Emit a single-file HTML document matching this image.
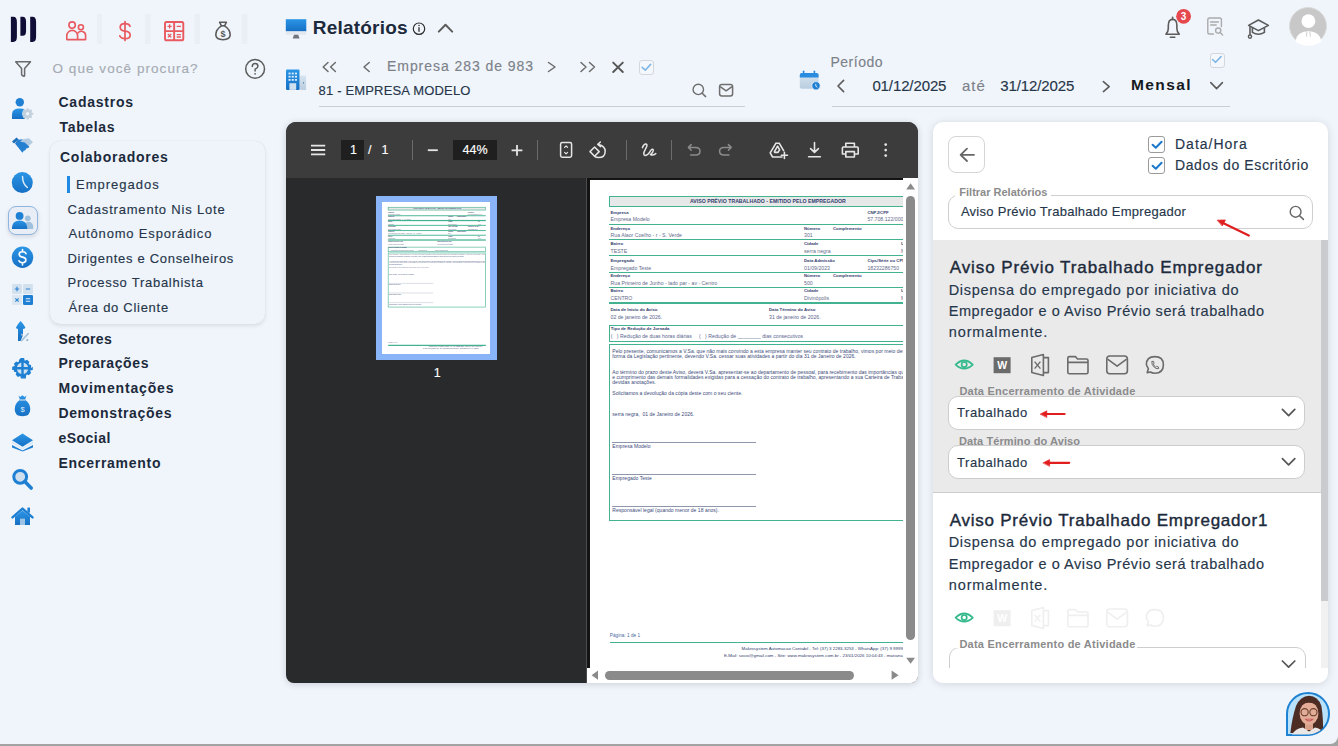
<!DOCTYPE html>
<html><head><meta charset="utf-8">
<style>
html,body{margin:0;padding:0}
body{width:1338px;height:746px;overflow:hidden;position:relative;background:#a3a3a3;font-family:"Liberation Sans",sans-serif}
#app{position:absolute;left:0;top:0;width:1338px;height:744px;background:#f0f5fc;border-bottom-right-radius:8px;overflow:hidden}
.t{position:absolute;white-space:nowrap;line-height:1}
.rg{-webkit-text-stroke:0.15px currentColor}
.abs{position:absolute}
</style></head><body>
<div id="app">
<!-- submenu card -->
<div class="abs" style="left:50px;top:141px;width:215px;height:183px;border-radius:10px;background:#eff4fb;box-shadow:0 2px 4px rgba(0,0,0,0.09),0 0 1px rgba(0,0,0,0.12)"></div>
<div class="abs" style="left:67px;top:176px;width:3px;height:17px;background:#1e88e5"></div>
<!-- selected sidebar item -->
<div class="abs" style="left:8px;top:206px;width:28px;height:27px;border-radius:8px;border:1px solid #8fb5e0;background:#e9eef6;box-shadow:0 2px 4px rgba(0,0,0,0.12)"></div>
<!-- header underlines -->
<div class="abs" style="left:319px;top:106px;width:426px;height:1px;background:#c9ced6"></div>
<div class="abs" style="left:832px;top:106px;width:398px;height:1px;background:#c9ced6"></div>
<!-- checkboxes header -->
<div class="abs" style="left:639px;top:60px;width:13px;height:13px;border:1px solid #d3d6db;border-radius:3px;background:#f4f7fb"></div>
<div class="abs" style="left:1209.5px;top:52.5px;width:13px;height:13px;border:1px solid #d3d6db;border-radius:3px;background:#f4f7fb"></div>
<!-- top avatar -->
<div class="abs" style="left:1289px;top:7px;width:38px;height:38px;border-radius:50%;background:#c8c8c8;border:1px solid #dcdcdc;box-sizing:border-box"></div>
<!-- PDF viewer -->
<div class="abs" style="left:286px;top:122px;width:632px;height:561px;border-radius:10px 10px 8px 8px;background:#282a2c;overflow:hidden;box-shadow:0 1px 7px rgba(0,0,0,0.17)">
  <div class="abs" style="left:0;top:0;width:632px;height:56px;background:#3c3c3c"></div>
  <div class="abs" style="left:55px;top:18px;width:23px;height:20px;background:#1f1f1f"></div>
  <div class="abs" style="left:167px;top:18px;width:44px;height:20px;background:#1f1f1f"></div>
  <div class="abs" style="left:126px;top:18px;width:1px;height:20px;background:#6b6b6b"></div>
  <div class="abs" style="left:251px;top:18px;width:1px;height:20px;background:#6b6b6b"></div>
  <div class="abs" style="left:340px;top:18px;width:1px;height:20px;background:#6b6b6b"></div>
  <div class="abs" style="left:385px;top:18px;width:1px;height:20px;background:#6b6b6b"></div>
  <!-- thumbnail -->
  <div class="abs" style="left:89.5px;top:73.7px;width:121px;height:164px;background:#8ab4f8"></div>
  <div class="abs" style="left:96px;top:79.6px;width:108px;height:152.7px;background:#fff;overflow:hidden"><div class="abs" style="left:0;top:0;width:349.5px;height:494px;background:#fff;transform:scale(0.309);transform-origin:0 0"><div class="abs" style="left:19.3px;top:16.3px;width:317.2px;height:10.4px;background:#e7e9e9;border:2.6px solid #43b290;box-sizing:border-box"></div>
<div class="t" style="left:19.3px;top:19.20px;font-size:5.2px;line-height:5.2px;font-weight:700;color:#33406e;width:317.20000000000005px;text-align:center">AVISO PRÉVIO TRABALHADO - EMITIDO PELO EMPREGADOR</div>
<div class="t" style="left:20.5px;top:30.55px;font-size:4.3px;line-height:4.3px;font-weight:700;color:#33406e;">Empresa</div>
<div class="t" style="left:20.5px;top:37.30px;font-size:5.2px;line-height:5.2px;font-weight:400;color:#646c8c;">Empresa Modelo</div>
<div class="t" style="left:277.4px;top:30.55px;font-size:4.3px;line-height:4.3px;font-weight:700;color:#33406e;">CNPJ/CPF</div>
<div class="t" style="left:277.4px;top:37.30px;font-size:5.2px;line-height:5.2px;font-weight:400;color:#646c8c;">57.708.122/0001-00</div>
<div class="abs" style="left:19.3px;top:42.6px;width:317.2px;height:3.4px;background:#43b290"></div>
<div class="t" style="left:20.5px;top:46.65px;font-size:4.3px;line-height:4.3px;font-weight:700;color:#33406e;">Endereço</div>
<div class="t" style="left:20.5px;top:53.00px;font-size:5.2px;line-height:5.2px;font-weight:400;color:#646c8c;">Rua Alaor Coelho - r - S. Verde</div>
<div class="t" style="left:214.0px;top:46.65px;font-size:4.3px;line-height:4.3px;font-weight:700;color:#33406e;">Número</div>
<div class="t" style="left:214.0px;top:53.00px;font-size:5.2px;line-height:5.2px;font-weight:400;color:#646c8c;">301</div>
<div class="t" style="left:243.0px;top:46.65px;font-size:4.3px;line-height:4.3px;font-weight:700;color:#33406e;">Complemento</div>
<div class="abs" style="left:19.3px;top:58.2px;width:317.2px;height:3.4px;background:#43b290"></div>
<div class="t" style="left:20.5px;top:62.45px;font-size:4.3px;line-height:4.3px;font-weight:700;color:#33406e;">Bairro</div>
<div class="t" style="left:20.5px;top:69.00px;font-size:5.2px;line-height:5.2px;font-weight:400;color:#646c8c;">TESTE</div>
<div class="t" style="left:214.0px;top:62.45px;font-size:4.3px;line-height:4.3px;font-weight:700;color:#33406e;">Cidade</div>
<div class="t" style="left:214.0px;top:69.00px;font-size:5.2px;line-height:5.2px;font-weight:400;color:#646c8c;">serra negra</div>
<div class="t" style="left:311.0px;top:62.45px;font-size:4.3px;line-height:4.3px;font-weight:700;color:#33406e;">UF</div>
<div class="t" style="left:311.0px;top:69.00px;font-size:5.2px;line-height:5.2px;font-weight:400;color:#646c8c;">MG</div>
<div class="abs" style="left:19.3px;top:74.0px;width:317.2px;height:3.4px;background:#43b290"></div>
<div class="t" style="left:20.5px;top:79.45px;font-size:4.3px;line-height:4.3px;font-weight:700;color:#33406e;">Empregado</div>
<div class="t" style="left:20.5px;top:86.00px;font-size:5.2px;line-height:5.2px;font-weight:400;color:#646c8c;">Empregado Teste</div>
<div class="t" style="left:214.0px;top:79.45px;font-size:4.3px;line-height:4.3px;font-weight:700;color:#33406e;">Data Admissão</div>
<div class="t" style="left:214.0px;top:86.00px;font-size:5.2px;line-height:5.2px;font-weight:400;color:#646c8c;">01/09/2023</div>
<div class="t" style="left:277.4px;top:79.45px;font-size:4.3px;line-height:4.3px;font-weight:700;color:#33406e;">Ctps/Série ou CPF</div>
<div class="t" style="left:277.4px;top:86.00px;font-size:5.2px;line-height:5.2px;font-weight:400;color:#646c8c;">18232286750</div>
<div class="abs" style="left:19.3px;top:91.0px;width:317.2px;height:3.4px;background:#43b290"></div>
<div class="t" style="left:20.5px;top:94.45px;font-size:4.3px;line-height:4.3px;font-weight:700;color:#33406e;">Endereço</div>
<div class="t" style="left:20.5px;top:101.00px;font-size:5.2px;line-height:5.2px;font-weight:400;color:#646c8c;">Rua Primeiro de Junho - lado par - av - Centro</div>
<div class="t" style="left:214.0px;top:94.45px;font-size:4.3px;line-height:4.3px;font-weight:700;color:#33406e;">Número</div>
<div class="t" style="left:214.0px;top:101.00px;font-size:5.2px;line-height:5.2px;font-weight:400;color:#646c8c;">500</div>
<div class="t" style="left:243.0px;top:94.45px;font-size:4.3px;line-height:4.3px;font-weight:700;color:#33406e;">Complemento</div>
<div class="abs" style="left:19.3px;top:106.1px;width:317.2px;height:3.4px;background:#43b290"></div>
<div class="t" style="left:20.5px;top:109.45px;font-size:4.3px;line-height:4.3px;font-weight:700;color:#33406e;">Bairro</div>
<div class="t" style="left:20.5px;top:116.00px;font-size:5.2px;line-height:5.2px;font-weight:400;color:#646c8c;">CENTRO</div>
<div class="t" style="left:214.0px;top:109.45px;font-size:4.3px;line-height:4.3px;font-weight:700;color:#33406e;">Cidade</div>
<div class="t" style="left:214.0px;top:116.00px;font-size:5.2px;line-height:5.2px;font-weight:400;color:#646c8c;">Divinópolis</div>
<div class="t" style="left:311.0px;top:109.45px;font-size:4.3px;line-height:4.3px;font-weight:700;color:#33406e;">UF</div>
<div class="t" style="left:311.0px;top:116.00px;font-size:5.2px;line-height:5.2px;font-weight:400;color:#646c8c;">MG</div>
<div class="abs" style="left:19.3px;top:121.4px;width:317.2px;height:3.4px;background:#43b290"></div>
<div class="t" style="left:20.5px;top:128.35px;font-size:4.3px;line-height:4.3px;font-weight:700;color:#33406e;">Data de Início do Aviso</div>
<div class="t" style="left:179.0px;top:128.35px;font-size:4.3px;line-height:4.3px;font-weight:700;color:#33406e;">Data Término do Aviso</div>
<div class="t" style="left:20.5px;top:135.20px;font-size:5.2px;line-height:5.2px;font-weight:400;color:#5a6590;">02 de janeiro de 2026.</div>
<div class="t" style="left:179.0px;top:135.20px;font-size:5.2px;line-height:5.2px;font-weight:400;color:#5a6590;">31 de janeiro de 2026.</div>
<div class="abs" style="left:19.3px;top:145.0px;width:317.2px;height:17.0px;border:2.6px solid #43b290;box-sizing:border-box"></div>
<div class="t" style="left:20.8px;top:147.25px;font-size:4.3px;line-height:4.3px;font-weight:700;color:#33406e;">Tipo de Redução de Jornada</div>
<div class="t" style="left:20.8px;top:153.60px;font-size:5.2px;line-height:5.2px;font-weight:400;color:#5a6590;">(&nbsp;&nbsp;&nbsp;) Redução de duas horas diárias &nbsp;&nbsp;&nbsp; (&nbsp;&nbsp;&nbsp;) Redução de ________ dias consecutivos</div>
<div class="abs" style="left:19.3px;top:163.6px;width:317.2px;height:177.2px;border:2.6px solid #43b290;box-sizing:border-box"></div>
<div class="t" style="left:22.3px;top:168.50px;font-size:5.0px;line-height:5.0px;font-weight:400;color:#3b4a7a;letter-spacing:0.03px;width:311px;overflow:hidden">Pelo presente, comunicamos a V.Sa. que não mais convindo a esta empresa manter seu contrato de trabalho, vimos por meio deste, rescindi-lo de acordo com a</div>
<div class="t" style="left:22.3px;top:173.60px;font-size:5.0px;line-height:5.0px;font-weight:400;color:#3b4a7a;letter-spacing:0.03px;width:311px;overflow:hidden">forma da Legislação pertinente, devendo V.Sa. cessar suas atividades a partir do dia 31 de Janeiro de 2026.</div>
<div class="t" style="left:22.3px;top:189.60px;font-size:5.0px;line-height:5.0px;font-weight:400;color:#3b4a7a;letter-spacing:0.03px;width:311px;overflow:hidden">Ao término do prazo deste Aviso, deverá V.Sa. apresentar-se ao departamento de pessoal, para recebimento das importâncias que lhe são devidas</div>
<div class="t" style="left:22.3px;top:194.70px;font-size:5.0px;line-height:5.0px;font-weight:400;color:#3b4a7a;letter-spacing:0.03px;width:311px;overflow:hidden">e cumprimento das demais formalidades exigidas para a cessação do contrato de trabalho, apresentando a sua Carteira de Trabalho para as</div>
<div class="t" style="left:22.3px;top:199.60px;font-size:5.0px;line-height:5.0px;font-weight:400;color:#3b4a7a;letter-spacing:0.03px;width:311px;overflow:hidden">devidas anotações.</div>
<div class="t" style="left:22.3px;top:210.50px;font-size:5.0px;line-height:5.0px;font-weight:400;color:#3b4a7a;letter-spacing:0.03px;width:311px;overflow:hidden">Solicitamos a devolução da cópia deste com o seu ciente.</div>
<div class="t" style="left:22.3px;top:231.70px;font-size:5.0px;line-height:5.0px;font-weight:400;color:#3b4a7a;letter-spacing:0.03px;width:311px;overflow:hidden">serra negra,&nbsp; 01 de Janeiro de 2026.</div>
<div class="t" style="left:22.3px;top:264.30px;font-size:5.0px;line-height:5.0px;font-weight:400;color:#3b4a7a;letter-spacing:0.03px;width:311px;overflow:hidden">Empresa Modelo</div>
<div class="t" style="left:22.3px;top:295.80px;font-size:5.0px;line-height:5.0px;font-weight:400;color:#3b4a7a;letter-spacing:0.03px;width:311px;overflow:hidden">Empregado Teste</div>
<div class="t" style="left:22.3px;top:328.10px;font-size:5.0px;line-height:5.0px;font-weight:400;color:#3b4a7a;letter-spacing:0.03px;width:311px;overflow:hidden">Responsável legal (quando menor de 18 anos).</div>
<div class="abs" style="left:22.3px;top:261.7px;width:144.2px;height:1.8px;background:#8f97ab"></div>
<div class="abs" style="left:22.3px;top:293.5px;width:144.2px;height:1.8px;background:#8f97ab"></div>
<div class="abs" style="left:22.3px;top:325.7px;width:144.2px;height:1.8px;background:#8f97ab"></div>
<div class="t" style="left:19.8px;top:453.85px;font-size:4.7px;line-height:4.7px;font-weight:400;color:#4a6aa0;">Página: 1 de 1</div>
<div class="abs" style="left:19.8px;top:462.0px;width:316.7px;height:3.6px;background:#43b290"></div>
<div class="t" style="left:151.6px;top:466.80px;font-size:4.4px;line-height:4.4px;font-weight:400;color:#33406e;">Makrosystem Automacao Contabil - Tel: (37) 3 2283-3253 - WhatsApp: (37) 9 9999-9999</div>
<div class="t" style="left:133.9px;top:474.10px;font-size:4.4px;line-height:4.4px;font-weight:400;color:#33406e;">E-Mail: socio@gmail.com - Site: www.makrosystem.com.br - 23/01/2026 10:04:43 - mariana</div></div></div>
  <div class="abs" style="left:299.5px;top:56px;width:1.5px;height:505px;background:#4a4c4e"></div>
  <div class="abs" style="left:301px;top:56px;width:331px;height:505px;background:#141414"></div>
  <!-- page -->
  <div id="pagewrap" class="abs" style="left:304px;top:58px;width:313px;height:488px;overflow:hidden;background:#fff">
  <div class="abs" style="left:0;top:0;width:349.5px;height:494px;background:#fff"><div class="abs" style="left:19.3px;top:16.3px;width:317.2px;height:10.4px;background:#e7e9e9;border:1.0px solid #43b290;box-sizing:border-box"></div>
<div class="t" style="left:19.3px;top:19.20px;font-size:5.2px;line-height:5.2px;font-weight:700;color:#33406e;width:317.20000000000005px;text-align:center">AVISO PRÉVIO TRABALHADO - EMITIDO PELO EMPREGADOR</div>
<div class="t" style="left:20.5px;top:30.55px;font-size:4.3px;line-height:4.3px;font-weight:700;color:#33406e;">Empresa</div>
<div class="t" style="left:20.5px;top:37.30px;font-size:5.2px;line-height:5.2px;font-weight:400;color:#646c8c;">Empresa Modelo</div>
<div class="t" style="left:277.4px;top:30.55px;font-size:4.3px;line-height:4.3px;font-weight:700;color:#33406e;">CNPJ/CPF</div>
<div class="t" style="left:277.4px;top:37.30px;font-size:5.2px;line-height:5.2px;font-weight:400;color:#646c8c;">57.708.122/0001-00</div>
<div class="abs" style="left:19.3px;top:43.6px;width:317.2px;height:1.3px;background:#43b290"></div>
<div class="t" style="left:20.5px;top:46.65px;font-size:4.3px;line-height:4.3px;font-weight:700;color:#33406e;">Endereço</div>
<div class="t" style="left:20.5px;top:53.00px;font-size:5.2px;line-height:5.2px;font-weight:400;color:#646c8c;">Rua Alaor Coelho - r - S. Verde</div>
<div class="t" style="left:214.0px;top:46.65px;font-size:4.3px;line-height:4.3px;font-weight:700;color:#33406e;">Número</div>
<div class="t" style="left:214.0px;top:53.00px;font-size:5.2px;line-height:5.2px;font-weight:400;color:#646c8c;">301</div>
<div class="t" style="left:243.0px;top:46.65px;font-size:4.3px;line-height:4.3px;font-weight:700;color:#33406e;">Complemento</div>
<div class="abs" style="left:19.3px;top:59.2px;width:317.2px;height:1.3px;background:#43b290"></div>
<div class="t" style="left:20.5px;top:62.45px;font-size:4.3px;line-height:4.3px;font-weight:700;color:#33406e;">Bairro</div>
<div class="t" style="left:20.5px;top:69.00px;font-size:5.2px;line-height:5.2px;font-weight:400;color:#646c8c;">TESTE</div>
<div class="t" style="left:214.0px;top:62.45px;font-size:4.3px;line-height:4.3px;font-weight:700;color:#33406e;">Cidade</div>
<div class="t" style="left:214.0px;top:69.00px;font-size:5.2px;line-height:5.2px;font-weight:400;color:#646c8c;">serra negra</div>
<div class="t" style="left:311.0px;top:62.45px;font-size:4.3px;line-height:4.3px;font-weight:700;color:#33406e;">UF</div>
<div class="t" style="left:311.0px;top:69.00px;font-size:5.2px;line-height:5.2px;font-weight:400;color:#646c8c;">MG</div>
<div class="abs" style="left:19.3px;top:75.0px;width:317.2px;height:1.3px;background:#43b290"></div>
<div class="t" style="left:20.5px;top:79.45px;font-size:4.3px;line-height:4.3px;font-weight:700;color:#33406e;">Empregado</div>
<div class="t" style="left:20.5px;top:86.00px;font-size:5.2px;line-height:5.2px;font-weight:400;color:#646c8c;">Empregado Teste</div>
<div class="t" style="left:214.0px;top:79.45px;font-size:4.3px;line-height:4.3px;font-weight:700;color:#33406e;">Data Admissão</div>
<div class="t" style="left:214.0px;top:86.00px;font-size:5.2px;line-height:5.2px;font-weight:400;color:#646c8c;">01/09/2023</div>
<div class="t" style="left:277.4px;top:79.45px;font-size:4.3px;line-height:4.3px;font-weight:700;color:#33406e;">Ctps/Série ou CPF</div>
<div class="t" style="left:277.4px;top:86.00px;font-size:5.2px;line-height:5.2px;font-weight:400;color:#646c8c;">18232286750</div>
<div class="abs" style="left:19.3px;top:92.0px;width:317.2px;height:1.3px;background:#43b290"></div>
<div class="t" style="left:20.5px;top:94.45px;font-size:4.3px;line-height:4.3px;font-weight:700;color:#33406e;">Endereço</div>
<div class="t" style="left:20.5px;top:101.00px;font-size:5.2px;line-height:5.2px;font-weight:400;color:#646c8c;">Rua Primeiro de Junho - lado par - av - Centro</div>
<div class="t" style="left:214.0px;top:94.45px;font-size:4.3px;line-height:4.3px;font-weight:700;color:#33406e;">Número</div>
<div class="t" style="left:214.0px;top:101.00px;font-size:5.2px;line-height:5.2px;font-weight:400;color:#646c8c;">500</div>
<div class="t" style="left:243.0px;top:94.45px;font-size:4.3px;line-height:4.3px;font-weight:700;color:#33406e;">Complemento</div>
<div class="abs" style="left:19.3px;top:107.1px;width:317.2px;height:1.3px;background:#43b290"></div>
<div class="t" style="left:20.5px;top:109.45px;font-size:4.3px;line-height:4.3px;font-weight:700;color:#33406e;">Bairro</div>
<div class="t" style="left:20.5px;top:116.00px;font-size:5.2px;line-height:5.2px;font-weight:400;color:#646c8c;">CENTRO</div>
<div class="t" style="left:214.0px;top:109.45px;font-size:4.3px;line-height:4.3px;font-weight:700;color:#33406e;">Cidade</div>
<div class="t" style="left:214.0px;top:116.00px;font-size:5.2px;line-height:5.2px;font-weight:400;color:#646c8c;">Divinópolis</div>
<div class="t" style="left:311.0px;top:109.45px;font-size:4.3px;line-height:4.3px;font-weight:700;color:#33406e;">UF</div>
<div class="t" style="left:311.0px;top:116.00px;font-size:5.2px;line-height:5.2px;font-weight:400;color:#646c8c;">MG</div>
<div class="abs" style="left:19.3px;top:122.4px;width:317.2px;height:1.3px;background:#43b290"></div>
<div class="t" style="left:20.5px;top:128.35px;font-size:4.3px;line-height:4.3px;font-weight:700;color:#33406e;">Data de Início do Aviso</div>
<div class="t" style="left:179.0px;top:128.35px;font-size:4.3px;line-height:4.3px;font-weight:700;color:#33406e;">Data Término do Aviso</div>
<div class="t" style="left:20.5px;top:135.20px;font-size:5.2px;line-height:5.2px;font-weight:400;color:#5a6590;">02 de janeiro de 2026.</div>
<div class="t" style="left:179.0px;top:135.20px;font-size:5.2px;line-height:5.2px;font-weight:400;color:#5a6590;">31 de janeiro de 2026.</div>
<div class="abs" style="left:19.3px;top:145.0px;width:317.2px;height:17.0px;border:1.0px solid #43b290;box-sizing:border-box"></div>
<div class="t" style="left:20.8px;top:147.25px;font-size:4.3px;line-height:4.3px;font-weight:700;color:#33406e;">Tipo de Redução de Jornada</div>
<div class="t" style="left:20.8px;top:153.60px;font-size:5.2px;line-height:5.2px;font-weight:400;color:#5a6590;">(&nbsp;&nbsp;&nbsp;) Redução de duas horas diárias &nbsp;&nbsp;&nbsp; (&nbsp;&nbsp;&nbsp;) Redução de ________ dias consecutivos</div>
<div class="abs" style="left:19.3px;top:163.6px;width:317.2px;height:177.2px;border:1.0px solid #43b290;box-sizing:border-box"></div>
<div class="t" style="left:22.3px;top:168.50px;font-size:5.0px;line-height:5.0px;font-weight:400;color:#3b4a7a;letter-spacing:0.03px;width:311px;overflow:hidden">Pelo presente, comunicamos a V.Sa. que não mais convindo a esta empresa manter seu contrato de trabalho, vimos por meio deste, rescindi-lo de acordo com a</div>
<div class="t" style="left:22.3px;top:173.60px;font-size:5.0px;line-height:5.0px;font-weight:400;color:#3b4a7a;letter-spacing:0.03px;width:311px;overflow:hidden">forma da Legislação pertinente, devendo V.Sa. cessar suas atividades a partir do dia 31 de Janeiro de 2026.</div>
<div class="t" style="left:22.3px;top:189.60px;font-size:5.0px;line-height:5.0px;font-weight:400;color:#3b4a7a;letter-spacing:0.03px;width:311px;overflow:hidden">Ao término do prazo deste Aviso, deverá V.Sa. apresentar-se ao departamento de pessoal, para recebimento das importâncias que lhe são devidas</div>
<div class="t" style="left:22.3px;top:194.70px;font-size:5.0px;line-height:5.0px;font-weight:400;color:#3b4a7a;letter-spacing:0.03px;width:311px;overflow:hidden">e cumprimento das demais formalidades exigidas para a cessação do contrato de trabalho, apresentando a sua Carteira de Trabalho para as</div>
<div class="t" style="left:22.3px;top:199.60px;font-size:5.0px;line-height:5.0px;font-weight:400;color:#3b4a7a;letter-spacing:0.03px;width:311px;overflow:hidden">devidas anotações.</div>
<div class="t" style="left:22.3px;top:210.50px;font-size:5.0px;line-height:5.0px;font-weight:400;color:#3b4a7a;letter-spacing:0.03px;width:311px;overflow:hidden">Solicitamos a devolução da cópia deste com o seu ciente.</div>
<div class="t" style="left:22.3px;top:231.70px;font-size:5.0px;line-height:5.0px;font-weight:400;color:#3b4a7a;letter-spacing:0.03px;width:311px;overflow:hidden">serra negra,&nbsp; 01 de Janeiro de 2026.</div>
<div class="t" style="left:22.3px;top:264.30px;font-size:5.0px;line-height:5.0px;font-weight:400;color:#3b4a7a;letter-spacing:0.03px;width:311px;overflow:hidden">Empresa Modelo</div>
<div class="t" style="left:22.3px;top:295.80px;font-size:5.0px;line-height:5.0px;font-weight:400;color:#3b4a7a;letter-spacing:0.03px;width:311px;overflow:hidden">Empregado Teste</div>
<div class="t" style="left:22.3px;top:328.10px;font-size:5.0px;line-height:5.0px;font-weight:400;color:#3b4a7a;letter-spacing:0.03px;width:311px;overflow:hidden">Responsável legal (quando menor de 18 anos).</div>
<div class="abs" style="left:22.3px;top:261.7px;width:144.2px;height:0.7px;background:#8f97ab"></div>
<div class="abs" style="left:22.3px;top:293.5px;width:144.2px;height:0.7px;background:#8f97ab"></div>
<div class="abs" style="left:22.3px;top:325.7px;width:144.2px;height:0.7px;background:#8f97ab"></div>
<div class="t" style="left:19.8px;top:453.85px;font-size:4.7px;line-height:4.7px;font-weight:400;color:#4a6aa0;">Página: 1 de 1</div>
<div class="abs" style="left:19.8px;top:462.0px;width:316.7px;height:1.4px;background:#43b290"></div>
<div class="t" style="left:151.6px;top:466.80px;font-size:4.4px;line-height:4.4px;font-weight:400;color:#33406e;">Makrosystem Automacao Contabil - Tel: (37) 3 2283-3253 - WhatsApp: (37) 9 9999-9999</div>
<div class="t" style="left:133.9px;top:474.10px;font-size:4.4px;line-height:4.4px;font-weight:400;color:#33406e;">E-Mail: socio@gmail.com - Site: www.makrosystem.com.br - 23/01/2026 10:04:43 - mariana</div></div>
  </div>
  <!-- scrollbars -->
  <div class="abs" style="left:617px;top:56px;width:15px;height:505px;background:#fff"></div>
  <div class="abs" style="left:301px;top:546px;width:331px;height:15px;background:#fff"></div>
  <div class="abs" style="left:620.3px;top:74px;width:9px;height:444px;border-radius:4.5px;background:#8a8a8a"></div>
  <div class="abs" style="left:319px;top:549px;width:249px;height:9px;border-radius:4.5px;background:#8a8a8a"></div>
</div>
<!-- right panel -->
<div class="abs" style="left:932.5px;top:122px;width:395.5px;height:560.5px;border-radius:10px;background:#fff;box-shadow:0 1px 9px rgba(0,0,0,0.13);overflow:hidden">
  <div class="abs" style="left:15.5px;top:14px;width:36.5px;height:37px;border:1px solid #d5d5d5;border-radius:8px;box-sizing:border-box"></div>
  <div class="abs" style="left:215.5px;top:14px;width:17px;height:17px;border:1px solid #9a9a9a;border-radius:3px;box-sizing:border-box"></div>
  <div class="abs" style="left:215.5px;top:35px;width:17px;height:17px;border:1px solid #9a9a9a;border-radius:3px;box-sizing:border-box"></div>
  <div class="abs" style="left:15.5px;top:73px;width:364.5px;height:33.5px;border:1px solid #cfcfcf;border-radius:10px;box-sizing:border-box"></div>
  <div class="abs" style="left:22px;top:67px;width:96px;height:8px;background:#fff"></div>
  <!-- list -->
  <div class="abs" style="left:0;top:118px;width:388.5px;height:253px;background:#eaeaeb;border-bottom:1px solid #cdcdcd;box-sizing:border-box"></div>
  <div class="abs" style="left:15.8px;top:273.5px;width:357.2px;height:34px;border:1px solid #cdcdcd;border-radius:10px;background:#fff;box-sizing:border-box"></div>
  <div class="abs" style="left:22px;top:266px;width:182px;height:7.5px;background:#eaeaeb"></div>
  <div class="abs" style="left:15.8px;top:322.5px;width:357.2px;height:34px;border:1px solid #cdcdcd;border-radius:10px;background:#fff;box-sizing:border-box"></div>
  <div class="abs" style="left:22px;top:315px;width:127px;height:7.5px;background:#eaeaeb"></div>
  <div class="abs" style="left:16px;top:524.5px;width:357px;height:40px;border:1px solid #cdcdcd;border-radius:10px;background:#fff;box-sizing:border-box"></div>
  <div class="abs" style="left:22px;top:518px;width:182px;height:8px;background:#fff"></div>
  <div class="abs" style="left:0;top:545.8px;width:388.5px;height:20px;background:#fff"></div>
  <div class="abs" style="left:388.5px;top:118px;width:7px;height:428px;background:#f1f1f1"></div>
  <div class="abs" style="left:388.5px;top:118px;width:7px;height:360.5px;background:#c9cbce"></div>
</div>
<!-- assistant avatar -->
<div class="abs" style="left:1286px;top:692px;width:44px;height:44px;border-radius:50% 50% 50% 0;background:#b9e1fa;border:2px solid #1e82d4;box-sizing:border-box"></div>
<div id="ph" class="t rg" style="left:52.50px;top:62.17px;font-size:13.5px;font-weight:400;color:#a6abb2;letter-spacing:1.056px;">O que você procura?</div>
<div id="m1" class="t" style="left:58.50px;top:95.15px;font-size:14px;font-weight:700;color:#1c2a3b;letter-spacing:0.750px;">Cadastros</div>
<div id="m2" class="t" style="left:59.50px;top:120.15px;font-size:14px;font-weight:700;color:#1c2a3b;letter-spacing:0.667px;">Tabelas</div>
<div id="colab" class="t" style="left:60.00px;top:150.15px;font-size:14px;font-weight:700;color:#1c2a3b;letter-spacing:0.750px;">Colaboradores</div>
<div id="s0" class="t rg" style="left:76.00px;top:177.59px;font-size:13px;font-weight:400;color:#26364a;letter-spacing:1.000px;">Empregados</div>
<div id="s1" class="t rg" style="left:67.50px;top:202.99px;font-size:13px;font-weight:400;color:#26364a;letter-spacing:0.810px;">Cadastramento Nis Lote</div>
<div id="s2" class="t rg" style="left:68.50px;top:227.49px;font-size:13px;font-weight:400;color:#26364a;letter-spacing:0.833px;">Autônomo Esporádico</div>
<div id="s3" class="t rg" style="left:67.50px;top:251.99px;font-size:13px;font-weight:400;color:#26364a;letter-spacing:0.708px;">Dirigentes e Conselheiros</div>
<div id="s4" class="t rg" style="left:67.50px;top:275.99px;font-size:13px;font-weight:400;color:#26364a;letter-spacing:0.737px;">Processo Trabalhista</div>
<div id="s5" class="t rg" style="left:68.50px;top:300.69px;font-size:13px;font-weight:400;color:#26364a;letter-spacing:0.714px;">Área do Cliente</div>
<div id="b0" class="t" style="left:58.40px;top:331.75px;font-size:14px;font-weight:700;color:#1c2a3b;letter-spacing:0.333px;">Setores</div>
<div id="b1" class="t" style="left:58.40px;top:356.15px;font-size:14px;font-weight:700;color:#1c2a3b;letter-spacing:0.600px;">Preparações</div>
<div id="b2" class="t" style="left:58.40px;top:381.15px;font-size:14px;font-weight:700;color:#1c2a3b;letter-spacing:0.833px;">Movimentações</div>
<div id="b3" class="t" style="left:58.40px;top:406.15px;font-size:14px;font-weight:700;color:#1c2a3b;letter-spacing:0.667px;">Demonstrações</div>
<div id="b4" class="t" style="left:58.40px;top:431.15px;font-size:14px;font-weight:700;color:#1c2a3b;letter-spacing:0.500px;">eSocial</div>
<div id="b5" class="t" style="left:58.40px;top:456.15px;font-size:14px;font-weight:700;color:#1c2a3b;letter-spacing:0.727px;">Encerramento</div>
<div id="rel" class="t" style="left:312.70px;top:17.81px;font-size:19px;font-weight:700;color:#1c2a3b;letter-spacing:0.222px;">Relatórios</div>
<div id="emp" class="t rg" style="left:387.00px;top:59.15px;font-size:14px;font-weight:400;color:#7c8189;letter-spacing:0.941px;">Empresa 283 de 983</div>
<div id="empm" class="t rg" style="left:318.60px;top:83.79px;font-size:13px;font-weight:400;color:#26364a;letter-spacing:0.167px;">81 - EMPRESA MODELO</div>
<div id="per" class="t rg" style="left:830.50px;top:55.15px;font-size:14px;font-weight:400;color:#7c8189;letter-spacing:0.500px;">Período</div>
<div id="d1" class="t rg" style="left:872.40px;top:78.30px;font-size:15px;font-weight:400;color:#26364a;letter-spacing:-0.111px;">01/12/2025</div>
<div id="ate" class="t rg" style="left:962.00px;top:78.30px;font-size:15px;font-weight:400;color:#7c8189;letter-spacing:1.000px;">até</div>
<div id="d2" class="t rg" style="left:1000.30px;top:78.10px;font-size:15px;font-weight:400;color:#26364a;letter-spacing:-0.111px;">31/12/2025</div>
<div id="mens" class="t" style="left:1131.00px;top:77.48px;font-size:15.5px;font-weight:700;color:#151a22;letter-spacing:1.400px;">Mensal</div>
<div id="zoom" class="t rg" style="left:462.60px;top:144.02px;font-size:12.5px;font-weight:400;color:#ffffff;letter-spacing:0.000px;">44%</div>
<div id="pg1" class="t rg" style="left:350.00px;top:144.02px;font-size:12.5px;font-weight:400;color:#ffffff;letter-spacing:0.000px;">1</div>
<div id="pgs" class="t rg" style="left:368.00px;top:144.02px;font-size:12.5px;font-weight:400;color:#ffffff;letter-spacing:0.000px;">/</div>
<div id="pg2" class="t rg" style="left:381.60px;top:144.02px;font-size:12.5px;font-weight:400;color:#ffffff;letter-spacing:0.000px;">1</div>
<div id="th1" class="t rg" style="left:433.70px;top:367.42px;font-size:12.5px;font-weight:400;color:#ffffff;letter-spacing:0.000px;">1</div>
<div id="dh" class="t rg" style="left:1175.00px;top:136.85px;font-size:14px;font-weight:400;color:#26364a;letter-spacing:1.000px;">Data/Hora</div>
<div id="de" class="t rg" style="left:1175.00px;top:157.75px;font-size:14px;font-weight:400;color:#26364a;letter-spacing:0.611px;">Dados do Escritório</div>
<div id="flt" class="t" style="left:959.30px;top:186.69px;font-size:11px;font-weight:700;color:#8b8b8b;letter-spacing:-0.000px;">Filtrar Relatórios</div>
<div id="inp" class="t rg" style="left:960.90px;top:204.99px;font-size:13px;font-weight:400;color:#26364a;letter-spacing:0.273px;">Aviso Prévio Trabalhado Empregador</div>
<div id="t1" class="t rg" style="left:949.70px;top:258.71px;font-size:17px;font-weight:400;color:#1c2a3b;letter-spacing:0.909px;-webkit-text-stroke:0.4px currentColor">Aviso Prévio Trabalhado Empregador</div>
<div id="d11" class="t rg" style="left:948.70px;top:282.52px;font-size:14.5px;font-weight:400;color:#26364a;letter-spacing:0.711px;">Dispensa do empregado por iniciativa do</div>
<div id="d12" class="t rg" style="left:948.70px;top:303.92px;font-size:14.5px;font-weight:400;color:#26364a;letter-spacing:0.548px;">Empregador e o Aviso Prévio será trabalhado</div>
<div id="d13" class="t rg" style="left:948.70px;top:324.82px;font-size:14.5px;font-weight:400;color:#26364a;letter-spacing:0.909px;">normalmente.</div>
<div id="l1" class="t" style="left:959.40px;top:386.29px;font-size:11px;font-weight:700;color:#8b8b8b;letter-spacing:0.241px;">Data Encerramento de Atividade</div>
<div id="v1" class="t rg" style="left:957.00px;top:405.79px;font-size:13px;font-weight:400;color:#26364a;letter-spacing:0.556px;">Trabalhado</div>
<div id="l2" class="t" style="left:959.00px;top:435.69px;font-size:11px;font-weight:700;color:#8b8b8b;letter-spacing:0.100px;">Data Término do Aviso</div>
<div id="v2" class="t rg" style="left:957.00px;top:455.59px;font-size:13px;font-weight:400;color:#26364a;letter-spacing:0.556px;">Trabalhado</div>
<div id="t2" class="t rg" style="left:949.70px;top:511.51px;font-size:17px;font-weight:400;color:#1c2a3b;letter-spacing:0.765px;-webkit-text-stroke:0.4px currentColor">Aviso Prévio Trabalhado Empregador1</div>
<div id="d21" class="t rg" style="left:948.70px;top:535.22px;font-size:14.5px;font-weight:400;color:#26364a;letter-spacing:0.711px;">Dispensa do empregado por iniciativa do</div>
<div id="d22" class="t rg" style="left:948.70px;top:556.72px;font-size:14.5px;font-weight:400;color:#26364a;letter-spacing:0.548px;">Empregador e o Aviso Prévio será trabalhado</div>
<div id="d23" class="t rg" style="left:948.70px;top:577.62px;font-size:14.5px;font-weight:400;color:#26364a;letter-spacing:0.909px;">normalmente.</div>
<div id="l3" class="t" style="left:959.40px;top:639.19px;font-size:11px;font-weight:700;color:#8b8b8b;letter-spacing:0.241px;">Data Encerramento de Atividade</div>
<svg class="abs" style="left:0;top:0" width="1338" height="746" viewBox="0 0 1338 746">
<defs>
<linearGradient id="bl" x1="0" y1="0" x2="0" y2="1"><stop offset="0" stop-color="#2b95e6"/><stop offset="1" stop-color="#1670c4"/></linearGradient>
<linearGradient id="lb" x1="0" y1="0" x2="0" y2="1"><stop offset="0" stop-color="#d7e4f0"/><stop offset="1" stop-color="#b9cde0"/></linearGradient>
<clipPath id="avc"><path d="M1288,734.4 V714 A20.2,20.2 0 1 1 1308.2,734.4 Z"/></clipPath>
</defs>
<!-- logo -->
<g fill="#100d36">
<path d="M10.9,16.8 H13.3 Q16.9,16.8 16.9,22 V36.7 Q16.9,41.9 13.3,41.9 H10.9 Z"/>
<path d="M20.4,16.8 H22.7 Q26.05,16.8 26.05,21.5 V31.2 Q26.05,35.7 22.7,35.7 H20.4 Z"/>
<path d="M30.2,16.8 H32.5 Q36.1,16.8 36.1,22 V36.7 Q36.1,41.9 32.5,41.9 H30.2 Z"/>
</g>
<!-- top separators -->
<g fill="#000" fill-opacity="0.025">
<rect x="97" y="14" width="5" height="30"/><rect x="145" y="14" width="5.5" height="30"/><rect x="194.5" y="14" width="5.5" height="30"/><rect x="241.5" y="14" width="6" height="30"/>
</g>
<!-- people red -->
<g fill="none" stroke="#e85a5f" stroke-width="1.6" stroke-linejoin="round">
<circle cx="72.1" cy="25.1" r="3.2"/>
<circle cx="80.9" cy="27.3" r="2.5"/>
<path d="M66.8,39.6 V35.8 A5.4,5.4 0 0 1 77.6,35.8 V39.6 Z"/>
<path d="M77.6,33.4 A4.3,4.3 0 0 1 85.6,35.8 V39.6 H77.6"/>
</g>
<!-- $ red -->
<g fill="none" stroke="#e85a5f" stroke-width="1.7" stroke-linecap="round">
<path d="M125,21.5 V40.5"/>
<path d="M130,26.3 Q129.2,23.6 125,23.6 Q120.2,23.6 120.2,27.2 Q120.2,30.6 125,31.1 Q130.2,31.6 130.2,35.2 Q130.2,38.6 125,38.6 Q120.8,38.6 119.8,35.8"/>
</g>
<!-- calculator red -->
<g fill="none" stroke="#e85a5f" stroke-width="1.9">
<rect x="165" y="22" width="18.3" height="18.3" rx="1.6"/>
<path d="M174.15,22 V40.3 M165,31.15 H183.3"/>
<path stroke-width="1.3" d="M169.6,24.3 V28.5 M167.5,26.4 H171.7 M176.7,26.4 H180.9 M167.9,34 L171.3,37.4 M171.3,34 L167.9,37.4 M176.7,34.6 H180.9 M176.7,37 H180.9"/>
</g>
<!-- money bag gray -->
<g fill="none" stroke="#5b5b5b" stroke-width="1.6" stroke-linejoin="round">
<path d="M219.6,22.2 H226.4 L224.6,25.8 Q230.2,29.5 230.2,34.8 Q230.2,39.7 223,39.7 Q215.8,39.7 215.8,34.8 Q215.8,29.5 221.4,25.8 Z"/>
<path d="M221.2,25.8 H224.8"/>
</g>
<text x="223" y="37" font-family="Liberation Sans" font-weight="700" font-size="9" fill="#5b5b5b" text-anchor="middle">$</text>
<!-- filter -->
<path d="M15.7,61.7 H30.5 L24.6,68.6 V75.3 Q24.6,76.6 23.4,76 L22.4,75.5 Q21.6,75.1 21.6,74.2 V68.6 Z" fill="none" stroke="#6a6a6a" stroke-width="1.5" stroke-linejoin="round"/>
<!-- help -->
<circle cx="255.1" cy="68.9" r="9.4" fill="none" stroke="#5b5b5b" stroke-width="1.5"/>
<path d="M252.3,66.4 Q252.3,63.6 255.1,63.6 Q257.9,63.6 257.9,66.2 Q257.9,68 255.1,69.2 V71" fill="none" stroke="#5b5b5b" stroke-width="1.5" stroke-linecap="round"/>
<circle cx="255.1" cy="73.8" r="0.9" fill="#5b5b5b"/>

<!-- LEFT ICONS -->
<!-- person gear -->
<circle cx="19.8" cy="102.2" r="4.2" fill="#1f80d3"/>
<path d="M12,119 V114.5 Q12,108.6 19.6,108.6 Q23,108.6 25.2,109.8 V119 Z" fill="url(#bl)"/>
<g transform="translate(27.6,113.8)">
<circle r="5.6" fill="#fff" fill-opacity="0.6"/>
<path d="M-1,-5.6 H1 L1.4,-3.8 L3.2,-4.6 L4.6,-3.2 L3.8,-1.4 L5.6,-1 V1 L3.8,1.4 L4.6,3.2 L3.2,4.6 L1.4,3.8 L1,5.6 H-1 L-1.4,3.8 L-3.2,4.6 L-4.6,3.2 L-3.8,1.4 L-5.6,1 V-1 L-3.8,-1.4 L-4.6,-3.2 L-3.2,-4.6 L-1.4,-3.8 Z" fill="#c3d1de"/>
<circle r="1.7" fill="#eef3fa"/>
</g>
<!-- handshake -->
<g>
<path d="M19.5,140.6 L24,139 L29,138.2 L33,142.2 L28,146.4 Z" fill="#b3cbe0"/>
<path d="M12,141.6 L16.6,137.6 L18.6,139.4 L14,143.4 Z" fill="#1f6fb8"/>
<path d="M15,143.4 L17.6,139.8 L22.8,139.2 L21.6,140.6 L20.2,141 L21,141.8 L24.8,142.4 L29.4,146.8 L28.2,148 L26.2,148.6 L25.4,150.2 L23.8,150.8 L22.4,152.8 Z" fill="#2680d2"/>
</g>
<!-- clock -->
<circle cx="22.3" cy="182.6" r="10.5" fill="url(#bl)"/>
<path d="M22.5,176.6 Q22.6,184 27.3,187.4" fill="none" stroke="#d9ecfb" stroke-width="1.5" stroke-linecap="round"/>
<!-- people selected -->
<circle cx="27.8" cy="218.3" r="2.9" fill="#9fc0dc"/>
<path d="M24,229 V226.4 A4.6,4.6 0 0 1 33.2,226.4 V229 Z" fill="#9fc0dc"/>
<circle cx="19.6" cy="215.9" r="3.9" fill="#1f80d3"/>
<path d="M12,229 V227 A7.6,6.6 0 0 1 27.2,227 V229 Z" fill="url(#bl)"/>
<!-- $ circle -->
<circle cx="22.5" cy="257.3" r="10.7" fill="url(#bl)"/>
<path d="M26,253.7 Q25.4,251.8 22.5,251.8 Q19.2,251.8 19.2,254.3 Q19.2,256.6 22.5,257.1 Q25.9,257.6 25.9,260.1 Q25.9,262.7 22.5,262.7 Q19.6,262.7 19,260.8 M22.5,249.5 V251.8 M22.5,262.7 V265" fill="none" stroke="#fff" stroke-width="1.6" stroke-linecap="round"/>
<!-- calc squares -->
<rect x="12" y="284" width="10" height="10" rx="1.2" fill="#d3e1ee"/>
<rect x="23" y="284" width="10" height="10" rx="1.2" fill="#d3e1ee"/>
<rect x="12" y="295" width="10" height="10" rx="1.2" fill="#dce7f2"/>
<rect x="23" y="295" width="10" height="10" rx="1.2" fill="#1f7fd2"/>
<path d="M17,286.8 V291.2 M14.8,289 H19.2 M25.8,289 H30.2 M15.3,298.3 L18.7,301.7 M18.7,298.3 L15.3,301.7" stroke="#2f86d4" stroke-width="1.2"/>
<path d="M25.8,298.8 H30.2 M25.8,301.2 H30.2" stroke="#e3eefa" stroke-width="1.1"/>
<!-- arrow percent -->
<path d="M20.6,321 Q23.6,324 25.4,327.6 Q25.2,329 23,329 V335 L20.6,341 H18 V329 Q15.8,329 16,327.6 Q17.6,324 20.6,321 Z" fill="url(#bl)"/>
<path d="M21.6,340.6 L28.2,333.6" stroke="#a9c3da" stroke-width="1.6" stroke-linecap="round"/>
<rect x="21.2" y="333.8" width="1.8" height="1.8" fill="#a9c3da"/><rect x="26.4" y="339.2" width="1.8" height="1.8" fill="#8fb0c8"/>
<!-- gear cross -->
<g transform="translate(22.5,368.3)">
<path d="M-1.6,-10.3 H1.6 L2.2,-7.6 L4.6,-8.6 L6.9,-6.3 L5.9,-4 L8.6,-3.4 V-0.2 L10.3,-1.6 V1.6 L7.6,2.2 L8.6,4.6 L6.3,6.9 L4,5.9 L3.4,8.6 V10.3 H-1.6 L-2.2,7.6 L-4.6,8.6 L-6.9,6.3 L-5.9,4 L-8.6,3.4 V1.6 L-10.3,1.6 V-1.6 L-7.6,-2.2 L-8.6,-4.6 L-6.3,-6.9 L-4,-5.9 L-3.4,-8.6 Z" fill="#1f80d3"/>
<circle r="6.6" fill="#cfe0f0"/>
<path d="M0,-6.6 V6.6 M-6.6,0 H6.6" stroke="#1f80d3" stroke-width="2.4"/>
<circle r="6.6" fill="none" stroke="#1f80d3" stroke-width="1.6"/>
</g>
<!-- money bag blue -->
<path d="M18.4,395.4 L20.2,397 L22.4,395.2 L24.6,397 L26.5,395.4 L25,399.8 Q30.3,403.5 30.3,409.2 Q30.3,416.2 22.5,416.2 Q14.7,416.2 14.7,409.2 Q14.7,403.5 20,399.8 Z" fill="url(#bl)"/>
<rect x="19.6" y="399.2" width="5.8" height="1.6" fill="#a9c6e2"/>
<text x="22.5" y="412.4" font-family="Liberation Sans" font-size="7.5" fill="#dfeefb" text-anchor="middle">$</text>
<!-- layers -->
<path d="M12,445 L22.5,450.6 L33,445 V447.4 L22.5,451.4 L12,447.4 Z" fill="#1f7fd2"/>
<path d="M12,440.2 L22.5,433.6 L33,440.2 L22.5,446.8 Z" fill="url(#bl)"/>
<path d="M12,441.6 L22.5,448.2 L33,441.6 V443 L22.5,449 L12,443 Z" fill="#cfe3f5"/>
<!-- search -->
<circle cx="20.2" cy="476.8" r="6.4" fill="#cfdfee" stroke="#1f80d3" stroke-width="3"/>
<path d="M24.8,481.6 L31.2,488" stroke="#1f80d3" stroke-width="3.6" stroke-linecap="round"/>
<!-- home -->
<path d="M12.5,517.4 L22.5,508.6 L32.5,517.4" fill="none" stroke="#1f80d3" stroke-width="2.4" stroke-linecap="round" stroke-linejoin="round"/>
<path d="M15,516.6 L22.5,510.6 L30,516.6 V525 H15 Z" fill="url(#bl)"/>
<rect x="27.4" y="507.6" width="2.6" height="5" fill="#1f80d3"/>
<rect x="20" y="518.6" width="5" height="6.4" fill="#9cc3e6"/>

<!-- HEADER -->
<!-- monitor -->
<rect x="285.8" y="19.2" width="20.5" height="12.2" fill="url(#bl)"/>
<rect x="285.8" y="31.4" width="20.5" height="3.4" fill="#e3e8ee"/>
<path d="M294,34.8 H298.2 L299.6,38.4 H292.6 Z" fill="#6f7680"/>
<!-- info -->
<circle cx="419" cy="28.7" r="5.7" fill="none" stroke="#2b2b2b" stroke-width="1.2"/>
<path d="M419,27.3 V31.8" stroke="#2b2b2b" stroke-width="1.3"/><circle cx="419" cy="25.4" r="0.75" fill="#2b2b2b"/>
<path d="M438.8,31.6 L445.5,24.8 L452.2,31.6" fill="none" stroke="#5b5b5b" stroke-width="2" stroke-linecap="round" stroke-linejoin="round"/>
<!-- building -->
<rect x="299.5" y="75.6" width="6.6" height="14.3" fill="url(#lb)"/>
<rect x="286" y="69.5" width="13.5" height="20.4" rx="1" fill="url(#bl)"/>
<g fill="#d8ecfb"><rect x="288.5" y="72.6" width="2.1" height="1.8"/><rect x="291.7" y="72.6" width="2.1" height="1.8"/><rect x="294.9" y="72.6" width="2.1" height="1.8"/>
<rect x="288.5" y="75.8" width="2.1" height="1.8"/><rect x="291.7" y="75.8" width="2.1" height="1.8"/><rect x="294.9" y="75.8" width="2.1" height="1.8"/>
<rect x="288.5" y="79" width="2.1" height="1.8"/><rect x="291.7" y="79" width="2.1" height="1.8"/><rect x="294.9" y="79" width="2.1" height="1.8"/></g>
<rect x="289.4" y="83.2" width="6.8" height="6.7" fill="#cfe0ef"/>
<rect x="303" y="82" width="1" height="1.6" fill="#6b8db0"/>
<!-- nav arrows -->
<g fill="none" stroke="#6b6b6b" stroke-width="1.5" stroke-linecap="round" stroke-linejoin="round">
<path d="M328,62.5 L323.2,67 L328,71.5 M335.4,62.5 L330.6,67 L335.4,71.5"/>
<path d="M369.2,62.5 L364,67 L369.2,71.5"/>
<path d="M548.5,62.5 L555,67 L548.5,71.5"/>
<path d="M581,62.5 L586,67 L581,71.5 M589.5,62.5 L594.5,67 L589.5,71.5"/>
</g>
<path d="M613.2,62.6 L622.8,72 M622.8,62.6 L613.2,72" stroke="#555" stroke-width="1.9" stroke-linecap="round"/>
<path d="M642.2,67.4 L645.3,70.2 L650.6,64.4" fill="none" stroke="#7fb6e6" stroke-width="1.6" stroke-linecap="round" stroke-linejoin="round"/>
<circle cx="698.3" cy="89.4" r="5.2" fill="none" stroke="#6e6e6e" stroke-width="1.4"/>
<path d="M702.2,93.3 L705.6,96.6" stroke="#6e6e6e" stroke-width="1.5" stroke-linecap="round"/>
<rect x="719.6" y="84.4" width="13" height="11.6" rx="2.2" fill="none" stroke="#6e6e6e" stroke-width="1.5"/>
<path d="M720.2,86.6 L726.1,90.8 L732,86.6" fill="none" stroke="#6e6e6e" stroke-width="1.5" stroke-linejoin="round"/>
<!-- calendar -->
<rect x="799.8" y="73" width="18.8" height="15.8" rx="2" fill="url(#lb)"/>
<path d="M799.8,75 Q799.8,73 801.8,73 H816.6 Q818.6,73 818.6,75 V77.6 H799.8 Z" fill="#2a8ce0"/>
<rect x="802.8" y="70.4" width="1.6" height="3.4" rx="0.8" fill="#2a8ce0"/><rect x="813.6" y="70.4" width="1.6" height="3.4" rx="0.8" fill="#2a8ce0"/>
<circle cx="816" cy="85.8" r="4.2" fill="#1f7fd2" stroke="#eff3fa" stroke-width="0.8"/>
<path d="M815.8,83.8 V86.2 L817.4,87.2" fill="none" stroke="#fff" stroke-width="0.8"/>
<g fill="none" stroke="#5b5b5b" stroke-width="1.6" stroke-linecap="round" stroke-linejoin="round">
<path d="M843.6,80.4 L838,86 L843.6,91.6"/>
<path d="M1103.4,81.6 L1109.2,86.6 L1103.4,91.6"/>
<path d="M1210.8,82.6 L1216.6,88.6 L1222.4,82.6"/>
</g>
<path d="M1212.6,59.5 L1215.6,62.3 L1221,56.6" fill="none" stroke="#7fb6e6" stroke-width="1.6" stroke-linecap="round" stroke-linejoin="round"/>
<!-- top right -->
<path d="M1166,34.2 Q1168.3,32.2 1168.3,28.6 V25.6 Q1168.3,19.4 1172.6,19.4 Q1176.9,19.4 1176.9,25.6 V28.6 Q1176.9,32.2 1179.2,34.2 Z" fill="none" stroke="#5b5b5b" stroke-width="1.6" stroke-linejoin="round"/>
<path d="M1172.6,17.2 V19.4 M1170.4,37.2 H1174.8" stroke="#5b5b5b" stroke-width="1.6" stroke-linecap="round"/>
<circle cx="1183.6" cy="16.3" r="7.4" fill="#e5484d"/>
<text x="1183.6" y="19.9" font-family="Liberation Sans" font-weight="700" font-size="10" fill="#fff" text-anchor="middle">3</text>
<g fill="none" stroke="#ababab" stroke-width="1.4" stroke-linecap="round" stroke-linejoin="round">
<path d="M1213.4,34 H1209.6 Q1207.8,34 1207.8,32.2 V19.8 Q1207.8,18 1209.6,18 H1219.6 Q1221.4,18 1221.4,19.8 V26.6"/>
<path d="M1210.6,22 H1218.4 M1210.6,25 H1216.2"/>
<circle cx="1218.2" cy="30.6" r="2.6"/><path d="M1220.2,32.6 L1222.6,35"/>
</g>
<g fill="none" stroke="#5b5b5b" stroke-width="1.6" stroke-linejoin="round">
<path d="M1248.6,25.4 L1258.4,20 L1268.4,25.4 L1258.4,30.6 Z"/>
<path d="M1252.4,27.6 V32.4 Q1258.4,36 1264.4,32.4 V27.6"/>
<path d="M1250,26.2 V35"/>
</g>
<circle cx="1250" cy="36.6" r="1.6" fill="none" stroke="#5b5b5b" stroke-width="1.4"/>
<!-- avatar person -->
<circle cx="1308.4" cy="21.2" r="6.9" fill="#fff"/>
<path d="M1295.4,41.4 Q1296.4,31.8 1308.4,31 Q1320.4,31.8 1321.4,41.4 Q1316,45.5 1308.4,45.6 Q1300.8,45.5 1295.4,41.4 Z" fill="#fff"/>
<path d="M1307,31.4 L1306.4,36.6 M1309.8,31.4 L1310.4,36.6" stroke="#c8c8c8" stroke-width="0.9"/>

<!-- PDF TOOLBAR -->
<g fill="none" stroke="#e6e6e6" stroke-width="1.8" stroke-linecap="butt">
<path d="M311,145.6 H325.2 M311,150 H325.2 M311,154.4 H325.2"/>
<path d="M427.8,150.2 H437.8"/>
<path d="M511.6,150.4 H522.4 M517,145 V155.8"/>
</g>
<g fill="none" stroke="#e6e6e6" stroke-width="1.5" stroke-linecap="round" stroke-linejoin="round">
<rect x="560.6" y="142.6" width="11" height="14.6" rx="1.6"/>
<path d="M564.6,147.4 L566.1,145.9 L567.6,147.4 M564.6,152.4 L566.1,153.9 L567.6,152.4" stroke-width="1.2"/>
<path d="M590,151.6 L594.6,147 L599.2,151.6 L594.6,156.2 Z"/>
<path d="M598.4,144.4 Q605.2,146 605.2,151.2 Q605.2,157.6 598.4,157.6 Q596,157.6 594.6,156.4" />
<path d="M600.4,142 L597.8,144.4 L600.6,146.6"/>
<path d="M642.4,147.6 Q644,143.6 646.2,144 Q648.2,144.6 645.2,149.6 Q642.4,154.8 645,155.4 Q647.8,155.8 650.8,150.4 Q652.4,148.2 653.4,150 Q653.2,152.8 650.4,154.6 Q652.8,155.8 655.8,153.6"/>
</g>
<g fill="none" stroke="#8b8b8b" stroke-width="1.5" stroke-linecap="round" stroke-linejoin="round">
<path d="M691.2,144.6 L688.4,147.4 L691.2,150.2 M688.6,147.4 H695.6 Q700,147.4 700,151.2 Q700,155 695.6,155 H690.6"/>
<path d="M728.4,144.6 L731.2,147.4 L728.4,150.2 M731,147.4 H724 Q719.6,147.4 719.6,151.2 Q719.6,155 724,155 H729"/>
</g>
<g fill="none" stroke="#e6e6e6" stroke-width="1.6" stroke-linecap="round" stroke-linejoin="round">
<path d="M776,143.2 H779.2 L783.6,150.6 M776,143.2 L770.2,152.8 L772.6,157 H782 M774.4,151.6 L777.6,146.2 L779.6,149.8 L778,152.4 H774.6 Z"/>
<path d="M784.4,152.2 V158.4 M781.3,155.3 H787.5"/>
<path d="M814.5,142.6 V152.4 M810.6,148.6 L814.5,152.4 L818.4,148.6 M808.6,156.8 H820.4"/>
<path d="M845.8,147 V143.2 H854.4 V147 M843,147 H857.2 Q858.2,147 858.2,148 V154 H854.4 M845.8,154 H842.4 V148 Q842.4,147 843.4,147 M845.8,151.6 H854.4 V157 H845.8 Z"/>
</g>
<g fill="#e6e6e6"><circle cx="885.7" cy="144.6" r="1.35"/><circle cx="885.7" cy="150.1" r="1.35"/><circle cx="885.7" cy="155.6" r="1.35"/></g>
<!-- scroll arrows -->
<g fill="#8a8a8a">
<path d="M906.2,189.6 L910.6,183.2 L915,189.6 Z"/>
<path d="M906.2,657.8 L910.6,663.8 L915,657.8 Z"/>
<path d="M598,670.6 L591.6,675.2 L598,679.8 Z"/>
<path d="M891.6,670.6 L898.6,675.2 L891.6,679.8 Z"/>
</g>

<!-- RIGHT PANEL -->
<path d="M967,148.6 L960.6,154.8 L967,161 M961,154.8 H974" fill="none" stroke="#676767" stroke-width="1.8" stroke-linecap="round" stroke-linejoin="round"/>
<g fill="none" stroke="#1c78cc" stroke-width="2" stroke-linecap="round" stroke-linejoin="round">
<path d="M1152.6,144.8 L1155.8,147.8 L1161.6,141.8"/>
<path d="M1152.6,165.8 L1155.8,168.8 L1161.6,162.8"/>
</g>
<circle cx="1295.6" cy="211.8" r="5.4" fill="none" stroke="#666" stroke-width="1.4"/>
<path d="M1299.6,215.8 L1303.4,219.4" stroke="#666" stroke-width="1.5" stroke-linecap="round"/>
<g stroke="#e01e1e" stroke-width="2.2" stroke-linecap="round" fill="#e01e1e">
<path d="M1222,222.4 L1248.8,235.6"/>
<path d="M1217.6,220.2 L1225.4,220 L1222.4,225.6 Z" stroke-width="0.8"/>
<path d="M1045,414 H1064.6"/>
<path d="M1040.4,414 L1046.8,410.8 V417.2 Z" stroke-width="0.6"/>
<path d="M1048,462.8 H1069.2"/>
<path d="M1043.2,462.8 L1049.6,459.6 V466 Z" stroke-width="0.6"/>
</g>
<!-- item icons -->
<g id="ic1">
<path d="M955.6,364.6 Q964.2,356.4 972.8,364.6 Q964.2,372.8 955.6,364.6 Z" fill="none" stroke="#35b98d" stroke-width="1.7" stroke-linejoin="round"/>
<circle cx="964.2" cy="364.6" r="2.6" fill="none" stroke="#35b98d" stroke-width="1.7"/>
</g>
<g id="ic2">
<rect x="993.6" y="357.2" width="17" height="16" fill="#6b6b6b"/>
<text x="1002.1" y="369.2" font-family="Liberation Sans" font-weight="700" font-size="10.5" fill="#fff" text-anchor="middle">W</text>
<g fill="none" stroke="#6b6b6b" stroke-width="1.6" stroke-linejoin="round">
<path d="M1031.8,357.6 L1043.4,354.6 V375.6 L1031.8,372.6 Z"/>
<path d="M1043.4,357.6 H1048.4 V372.6 H1043.4"/>
<path d="M1034.6,361.6 L1040.4,368.6 M1040.4,361.6 L1034.6,368.6" stroke-width="1.4"/>
<path d="M1067.8,372.2 V358.2 Q1067.8,356.6 1069.4,356.6 H1075.4 L1077.6,359 H1086.4 Q1088,359 1088,360.6 V372.2 Q1088,373.8 1086.4,373.8 H1069.4 Q1067.8,373.8 1067.8,372.2 Z M1067.8,362.4 H1088"/>
<rect x="1106.8" y="356" width="20.6" height="17.8" rx="3"/>
<path d="M1107.6,359.2 L1117.1,366.2 L1126.6,359.2"/>
<path d="M1147.2,372.6 L1148.4,368.6 Q1146.4,365.6 1146.4,364.6 Q1146.4,356.6 1154.8,356.6 Q1163.4,356.6 1163.4,364.8 Q1163.4,373.2 1154.8,373.2 Q1152,373.2 1150.4,372 Z"/>
<path d="M1151.8,361.4 Q1151.4,364.8 1154.4,367.4 Q1157.4,369.6 1158.8,368.4 L1158.2,366.8 L1156.6,366.4 L1155.6,367 Q1153.8,365.8 1153.4,364 L1154,363.2 L1153.6,361.4 Z" stroke-width="1"/>
</g>
</g>
<g transform="translate(0,253)" opacity="1">
<path d="M955.6,364.6 Q964.2,356.4 972.8,364.6 Q964.2,372.8 955.6,364.6 Z" fill="none" stroke="#35b98d" stroke-width="1.7" stroke-linejoin="round"/>
<circle cx="964.2" cy="364.6" r="2.6" fill="none" stroke="#35b98d" stroke-width="1.7"/>
<g opacity="0.1">
<rect x="993.6" y="357.2" width="17" height="16" fill="#6b6b6b"/>
<text x="1002.1" y="369.2" font-family="Liberation Sans" font-weight="700" font-size="10.5" fill="#fff" text-anchor="middle">W</text>
<g fill="none" stroke="#6b6b6b" stroke-width="1.6" stroke-linejoin="round">
<path d="M1031.8,357.6 L1043.4,354.6 V375.6 L1031.8,372.6 Z"/>
<path d="M1043.4,357.6 H1048.4 V372.6 H1043.4"/>
<path d="M1034.6,361.6 L1040.4,368.6 M1040.4,361.6 L1034.6,368.6" stroke-width="1.4"/>
<path d="M1067.8,372.2 V358.2 Q1067.8,356.6 1069.4,356.6 H1075.4 L1077.6,359 H1086.4 Q1088,359 1088,360.6 V372.2 Q1088,373.8 1086.4,373.8 H1069.4 Q1067.8,373.8 1067.8,372.2 Z M1067.8,362.4 H1088"/>
<rect x="1106.8" y="356" width="20.6" height="17.8" rx="3"/>
<path d="M1107.6,359.2 L1117.1,366.2 L1126.6,359.2"/>
<path d="M1147.2,372.6 L1148.4,368.6 Q1146.4,365.6 1146.4,364.6 Q1146.4,356.6 1154.8,356.6 Q1163.4,356.6 1163.4,364.8 Q1163.4,373.2 1154.8,373.2 Q1152,373.2 1150.4,372 Z"/>
</g>
</g>
</g>
<!-- select chevrons -->
<g fill="none" stroke="#555" stroke-width="1.7" stroke-linecap="round" stroke-linejoin="round">
<path d="M1282.4,409.4 L1288.6,415.6 L1294.8,409.4"/>
<path d="M1282.4,458.6 L1288.6,464.8 L1294.8,458.6"/>
<path d="M1282.4,661 L1288.6,667.2 L1294.8,661"/>
</g>
<!-- assistant avatar face -->
<g clip-path="url(#avc)">
<path d="M1290.4,733 Q1292,718 1296,706 Q1300.5,696 1309,695.8 Q1318,696 1321.4,706 Q1323.4,718 1323,733 Z" fill="#4d2c24"/>
<path d="M1305,722 H1313 V730 H1305 Z" fill="#d9a08a"/>
<ellipse cx="1309" cy="713.4" rx="9.4" ry="11.4" fill="#e2ac97"/>
<path d="M1299.4,709 Q1299.6,699.4 1309,699 Q1317.6,699.2 1319.4,707.6 Q1314,701.6 1306,703 Q1301,704.4 1299.4,709 Z" fill="#4d2c24"/>
<path d="M1291.6,735 Q1295.6,728.6 1303,727.6 L1309,731.4 L1315,727.6 Q1321.4,728.4 1323.6,734.4 L1323,735 Z" fill="#e9e8e6"/>
<circle cx="1304.6" cy="712.2" r="3.6" fill="none" stroke="#6a4030" stroke-width="1.1"/>
<circle cx="1313.4" cy="712.2" r="3.6" fill="none" stroke="#6a4030" stroke-width="1.1"/>
<path d="M1305.4,719.2 Q1309,722.6 1313,719.2 Z" fill="#fff" stroke="#c9595a" stroke-width="1.1" stroke-linejoin="round"/>
</g>
</svg>

</div>
</body></html>
